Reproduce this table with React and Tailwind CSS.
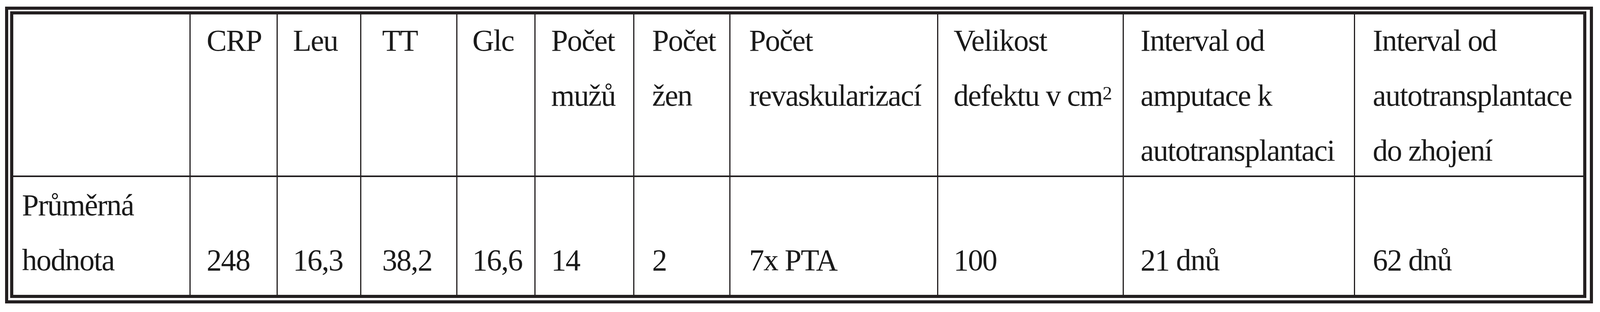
const columns = [
  { pl: "pl-[0.545vw]", head: [], value: ["Průměrná", "hodnota"] },
  { pl: "pl-[0.998vw]", head: ["CRP"], value: ["248"] },
  { pl: "pl-[0.944vw]", head: ["Leu"], value: ["16,3"] },
  { pl: "pl-[1.307vw]", head: ["TT"], value: ["38,2"] },
  { pl: "pl-[0.926vw]", head: ["Glc"], value: ["16,6"] },
  { pl: "pl-[0.98vw]", head: ["Počet", "mužů"], value: ["14"] },
  { pl: "pl-[1.107vw]", head: ["Počet", "žen"], value: ["2"] },
  { pl: "pl-[1.162vw]", head: ["Počet", "revaskularizací"], value: ["7x PTA"] },
  { pl: "pl-[0.962vw]", head: ["Velikost", "defektu v cm"], sup: true, value: ["100"] },
  { pl: "pl-[1.053vw]", head: ["Interval od", "amputace k", "autotransplantaci"], value: ["21 dnů"] },
  { pl: "pl-[1.107vw]", head: ["Interval od", "autotransplantace", "do zhojení"], value: ["62 dnů"] },
];

const Lines = ({ lines, sup }) => (
  <>
    {lines.map((line, i) => (
      <div key={i} className="whitespace-nowrap">
        {line}
        {sup && i === lines.length - 1 && (
          <sup className="text-[0.635em] top-[-0.33em] tracking-normal">2</sup>
        )}
      </div>
    ))}
  </>
);

const App = () => {
  return (
    <div className="w-full h-[800px] bg-white pt-[17px] pl-[13px] pr-[18px]">
      {/* double border: outer frame */}
      <div className="h-[761px] border-[8px] border-[#231f20] pt-[4px] pl-[5px] pr-[9px] pb-[5px]">
        <div className="h-[735px] border-[8px] border-[#231f20]">
          <div
            className="grid grid-cols-[minmax(0,611fr)_minmax(0,298fr)_minmax(0,285fr)_minmax(0,330fr)_minmax(0,266fr)_minmax(0,339fr)_minmax(0,329fr)_minmax(0,716fr)_minmax(0,639fr)_minmax(0,798fr)_minmax(0,791fr)] grid-rows-[413px_302px] gap-x-[3px] gap-y-[4px] bg-[#231f20] h-[719px] text-[#1a1a1a] text-[1.888vw] leading-[141px] tracking-[-0.024em]"
            style={{ fontFamily: '"Liberation Serif", "Times New Roman", serif' }}
          >
            {columns.map((col, i) => (
              <div key={`h${i}`} className={`${col.pl} bg-white`}>
                <div className="-mt-[3px]">
                  <Lines lines={col.head} sup={col.sup} />
                </div>
              </div>
            ))}
            {columns.map((col, i) => (
              <div
                key={`v${i}`}
                className={`${col.pl} bg-white flex flex-col justify-end pb-[18px]`}
              >
                <Lines lines={col.value} />
              </div>
            ))}
          </div>
        </div>
      </div>
    </div>
  );
};

export default App;
